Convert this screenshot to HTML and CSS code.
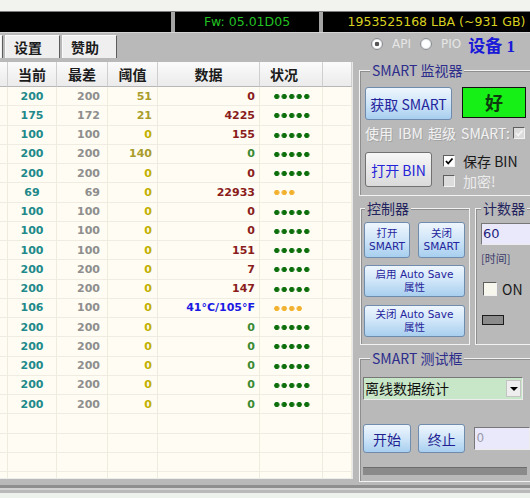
FILE: index.html
```html
<!DOCTYPE html>
<html lang="zh-CN">
<head>
  <meta charset="UTF-8">
  <title>SMART 监视器</title>
  <link rel="stylesheet" href="styles.css">
</head>
<body>
  <div class="top-strip"></div>

  <!-- 状态栏 -->
  <div class="status-bar">
    <div class="seg seg-left"></div>
    <div class="seg seg-fw">Fw: 05.01D05</div>
    <div class="seg seg-lba">1953525168 LBA (~931 GB)</div>
  </div>

  <div class="toolbar">
    <div class="tabs">
      <div class="tab tab-stub"></div>
      <div class="tab">设置</div>
      <div class="tab">赞助</div>
    </div>
    <div class="mode">
      <span class="radio checked"></span><span class="mode-label">API</span>
      <span class="radio"></span><span class="mode-label">PIO</span>
      <span class="device">设备 1</span>
    </div>
  </div>

  <div class="content">
    <!-- SMART 属性表 -->
    <div class="table-panel">
      <table class="smart-table">
        <thead>
          <tr>
            <th class="c-stub"></th>
            <th class="c-cur">当前</th>
            <th class="c-worst">最差</th>
            <th class="c-thr">阈值</th>
            <th class="c-raw">数据</th>
            <th class="c-st">状况</th>
            <th class="c-pad"></th>
          </tr>
        </thead>
        <tbody>
          <tr><td></td><td class="cur">200</td><td class="worst">200</td><td class="thr hi">51</td><td class="raw red">0</td><td class="st"><span class="dots d5"></span></td><td></td></tr>
          <tr><td></td><td class="cur">175</td><td class="worst">172</td><td class="thr hi">21</td><td class="raw red">4225</td><td class="st"><span class="dots d5"></span></td><td></td></tr>
          <tr><td></td><td class="cur">100</td><td class="worst">100</td><td class="thr">0</td><td class="raw red">155</td><td class="st"><span class="dots d5"></span></td><td></td></tr>
          <tr><td></td><td class="cur">200</td><td class="worst">200</td><td class="thr hi">140</td><td class="raw green">0</td><td class="st"><span class="dots d5"></span></td><td></td></tr>
          <tr><td></td><td class="cur">200</td><td class="worst">200</td><td class="thr">0</td><td class="raw red">0</td><td class="st"><span class="dots d5"></span></td><td></td></tr>
          <tr><td></td><td class="cur">69</td><td class="worst">69</td><td class="thr">0</td><td class="raw red">22933</td><td class="st"><span class="dots d3 warn"></span></td><td></td></tr>
          <tr><td></td><td class="cur">100</td><td class="worst">100</td><td class="thr">0</td><td class="raw red">0</td><td class="st"><span class="dots d5"></span></td><td></td></tr>
          <tr><td></td><td class="cur">100</td><td class="worst">100</td><td class="thr">0</td><td class="raw red">0</td><td class="st"><span class="dots d5"></span></td><td></td></tr>
          <tr><td></td><td class="cur">100</td><td class="worst">100</td><td class="thr">0</td><td class="raw red">151</td><td class="st"><span class="dots d5"></span></td><td></td></tr>
          <tr><td></td><td class="cur">200</td><td class="worst">200</td><td class="thr">0</td><td class="raw red">7</td><td class="st"><span class="dots d5"></span></td><td></td></tr>
          <tr><td></td><td class="cur">200</td><td class="worst">200</td><td class="thr">0</td><td class="raw red">147</td><td class="st"><span class="dots d5"></span></td><td></td></tr>
          <tr><td></td><td class="cur">106</td><td class="worst">100</td><td class="thr">0</td><td class="raw blue">41°C/105°F</td><td class="st"><span class="dots d4 warn"></span></td><td></td></tr>
          <tr><td></td><td class="cur">200</td><td class="worst">200</td><td class="thr">0</td><td class="raw green">0</td><td class="st"><span class="dots d5"></span></td><td></td></tr>
          <tr><td></td><td class="cur">200</td><td class="worst">200</td><td class="thr">0</td><td class="raw green">0</td><td class="st"><span class="dots d5"></span></td><td></td></tr>
          <tr><td></td><td class="cur">200</td><td class="worst">200</td><td class="thr">0</td><td class="raw green">0</td><td class="st"><span class="dots d5"></span></td><td></td></tr>
          <tr><td></td><td class="cur">200</td><td class="worst">200</td><td class="thr">0</td><td class="raw green">0</td><td class="st"><span class="dots d5"></span></td><td></td></tr>
          <tr><td></td><td class="cur">200</td><td class="worst">200</td><td class="thr">0</td><td class="raw green">0</td><td class="st"><span class="dots d5"></span></td><td></td></tr>
          <tr><td></td><td></td><td></td><td></td><td></td><td></td><td></td></tr>
          <tr><td></td><td></td><td></td><td></td><td></td><td></td><td></td></tr>
          <tr><td></td><td></td><td></td><td></td><td></td><td></td><td></td></tr>
          <tr><td></td><td></td><td></td><td></td><td></td><td></td><td></td></tr>
        </tbody>
      </table>
    </div>

    <!-- 右侧面板 -->
    <div class="side">
      <fieldset class="group monitor">
        <legend>SMART 监视器</legend>
        <div class="mon-top">
          <div class="btn btn-get">获取 SMART</div>
          <div class="good">好</div>
        </div>
        <div class="ibm">
          <span>使用 IBM 超级 SMART:</span>
          <span class="chk chk-off">
            <svg viewBox="0 0 10 10"><path d="M2 5 L4.2 7.5 L8.5 2.5" stroke="#f4f4f4" stroke-width="1.8" fill="none"/></svg>
          </span>
        </div>
        <div class="mon-bin">
          <div class="btn btn-gray btn-bin">打开 BIN</div>
          <div class="bin-opts">
            <div class="opt">
              <span class="chk">
                <svg viewBox="0 0 10 10"><path d="M2 5 L4.2 7.5 L8.5 2.5" stroke="#000" stroke-width="1.8" fill="none"/></svg>
              </span>
              <span>保存 BIN</span>
            </div>
            <div class="opt opt-off">
              <span class="chk chk-off"></span>
              <span>加密!</span>
            </div>
          </div>
        </div>
      </fieldset>

      <div class="group-row">
        <fieldset class="group control">
          <legend>控制器</legend>
          <div class="ctl-pair">
            <div class="btn btn-sm">打开<br>SMART</div>
            <div class="btn btn-sm">关闭<br>SMART</div>
          </div>
          <div class="btn btn-wide">启用 Auto Save<br>属性</div>
          <div class="btn btn-wide btn-wide2">关闭 Auto Save<br>属性</div>
        </fieldset>
        <fieldset class="group counter">
          <legend>计数器</legend>
          <div class="field field-num">60</div>
          <div class="time">[时间]</div>
          <div class="on-row">
            <span class="chk chk-big"></span>
            <span>ON</span>
          </div>
          <div class="led"></div>
        </fieldset>
      </div>

      <fieldset class="group tester">
        <legend>SMART 测试框</legend>
        <div class="combo">
          <span class="combo-text">离线数据统计</span>
          <span class="combo-arrow">
            <svg width="8" height="4" viewBox="0 0 8 4"><path d="M0 0H8L4 4Z" fill="#000"/></svg>
          </span>
        </div>
        <div class="test-row">
          <div class="btn btn-go">开始</div>
          <div class="btn btn-go btn-stop">终止</div>
          <div class="field field-count">0</div>
        </div>
        <div class="progress"></div>
      </fieldset>
    </div>
  </div>

  <div class="footer"></div>
</body>
</html>
```

FILE: styles.css
```css
body {
  margin: 0;
  width: 530px;
  height: 498px;
  overflow: hidden;
  background: #b9b9b9;
  font-family: "DejaVu Sans", "Noto Sans CJK SC", sans-serif;
  font-size: 12px;
}
.top-strip {
  height: 11px;
  background: #f2f2ef;
}

/* status bar */
.status-bar {
  display: flex;
  gap: 4px;
  height: 20px;
  background: #a4a4a4;
  border-top: 1px solid #7c7c7c;
  border-bottom: 1px solid #d4d4d4;
}
.seg {
  background: #000;
  line-height: 20px;
  font-size: 12.5px;
  text-align: center;
  white-space: nowrap;
}
.seg-left {
  width: 171px;
}
.seg-fw {
  width: 144px;
  color: #22c022;
}
.seg-lba {
  flex: 1;
  padding-left: 20px;
  color: #d8d020;
}

/* tabs + mode */
.toolbar {
  display: flex;
  justify-content: space-between;
  height: 29px;
}
.tabs {
  display: flex;
  gap: 2px;
  padding-top: 2px;
}
.tab {
  width: 55px;
  height: 23px;
  box-sizing: border-box;
  padding-left: 8px;
  background: #efefef;
  border: 1px solid #fafafa;
  border-right-color: #5c5c5c;
  border-bottom: 0;
  font: bold 14px/22px "Noto Sans CJK SC", sans-serif;
  color: #1a1a1a;
}
.tab-stub {
  width: 3px;
  padding: 0;
}
.mode {
  display: flex;
  align-items: center;
  height: 20px;
  margin-top: 1px;
  padding-right: 15px;
}
.radio {
  width: 12px;
  height: 12px;
  box-sizing: border-box;
  border: 1px solid #8d8d8d;
  border-radius: 50%;
  background: #fff;
  box-shadow: inset 0 0 0 1px #dfe6ee;
  margin-right: 9px;
}
.radio.checked {
  background: radial-gradient(circle, #555 2px, #fff 2.6px);
}
.mode-label {
  color: #e6e6e6;
  margin-right: 9px;
}
.device {
  margin-left: -2px;
  font: bold 17px "Liberation Serif", "Noto Sans CJK SC", serif;
  color: #1a1ad8;
}

/* main area */
.content {
  display: flex;
  height: 421px;
}
.table-panel {
  flex-shrink: 0;
  width: 352px;
  height: 416px;
  overflow: hidden;
  background: #fffcf3;
  border-right: 1px solid #e8e8e8;
  border-bottom: 1px solid #ececec;
}
.smart-table {
  border-collapse: separate;
  border-spacing: 0;
  table-layout: fixed;
  width: 352px;
}
.smart-table thead tr {
  height: 25px;
}
.smart-table th {
  box-sizing: border-box;
  padding: 0;
  background: linear-gradient(#fbfbfb, #ebebeb);
  border-right: 1px solid #cfcfcf;
  border-bottom: 1px solid #b8b8b8;
  font: bold 14px/24px "Noto Sans CJK SC", sans-serif;
  color: #1c1c1c;
  text-align: center;
}
.c-stub { width: 8px; }
.c-cur { width: 49px; }
.c-worst { width: 51px; }
.c-thr { width: 50px; }
.c-raw { width: 102px; }
.c-st { width: 63px; text-align: left !important; padding-left: 10px !important; }
.c-pad { width: 29px; }
.smart-table tbody tr {
  height: 19.25px;
}
.smart-table td {
  padding: 0;
  border-right: 1px solid #efebdf;
  border-bottom: 1px solid #f0ece2;
  font: bold 11px/17px "DejaVu Sans", sans-serif;
  white-space: nowrap;
  overflow: hidden;
}
.cur {
  text-align: center;
  color: #21898a;
}
.worst {
  text-align: right;
  padding-right: 7px !important;
  color: #8e8e8e;
}
.thr {
  text-align: right;
  padding-right: 5px !important;
  color: #c2b000;
}
.thr.hi {
  color: #aa9c2c;
}
.raw {
  text-align: right;
  padding-right: 4px !important;
}
.red { color: #8a1c1c; }
.green { color: #3a8a34; }
.blue { color: #1a1ae4; }
.st {
  padding-left: 13px !important;
}
.dots {
  display: inline-block;
  vertical-align: middle;
  height: 7px;
  background-image: radial-gradient(circle, #0c6f0c 2.3px, transparent 2.9px);
  background-size: 7.5px 7px;
  background-repeat: repeat-x;
}
.dots.warn {
  background-image: radial-gradient(circle, #f2b12e 2.3px, transparent 2.9px);
}
.d5 { width: 37.5px; }
.d4 { width: 30px; }
.d3 { width: 22.5px; }

/* right side */
.side {
  flex-shrink: 0;
  width: 175px;
  margin-left: 6px;
  font-family: "Noto Sans CJK SC", sans-serif;
  font-size: 14px;
  color: #1a1a1a;
}
.group {
  margin: 0;
  box-sizing: border-box;
  min-width: 0;
  border: 1px solid #f2f2f2;
  box-shadow: inset 1px 1px 0 #8e8e8e;
}
.group legend {
  padding: 0 2px;
  font-size: 14px;
  line-height: 16px;
  color: #2d2d8c;
  background: #b9b9b9;
}
.btn {
  display: flex;
  align-items: center;
  justify-content: center;
  box-sizing: border-box;
  border: 1px solid #6f8cae;
  border-radius: 3px;
  background: linear-gradient(#eef6fd, #cfe5f8 50%, #a8cfef);
  color: #24249c;
  text-align: center;
  line-height: 16px;
}
.btn-gray {
  border-color: #717171;
  background: linear-gradient(#f7f7f7, #dadada);
  color: #2424d8;
}

.monitor {
  width: 175px;
  padding: 9px 4px 8px 5px;
}
.monitor legend {
  margin-left: 5px;
}
.mon-top {
  display: flex;
  gap: 10px;
}
.btn-get {
  width: 87px;
  height: 33px;
}
.good {
  width: 64px;
  height: 31px;
  box-sizing: border-box;
  background: #16f016;
  border: 1px solid #111;
  font-weight: bold;
  font-size: 18px;
  line-height: 29px;
  text-align: center;
  color: #0f3a0f;
}
.ibm {
  display: flex;
  justify-content: space-between;
  align-items: center;
  height: 16px;
  margin-top: 5px;
  padding-right: 4px;
  line-height: 16px;
  word-spacing: 2px;
  color: #f2f2f2;
  text-shadow: 1px 1px 0 #a4a4a4;
}
.chk {
  display: flex;
  width: 12px;
  height: 12px;
  box-sizing: border-box;
  border: 1px solid;
  border-color: #5e5e5e #f2f2f2 #f2f2f2 #5e5e5e;
  background: #fff;
}
.chk svg {
  width: 10px;
  height: 10px;
}
.chk-off {
  background: #dcdcdc;
}
.chk-big {
  width: 14px;
  height: 14px;
  background: #f8f7ee;
}
.mon-bin {
  display: flex;
  gap: 11px;
  margin-top: 11px;
}
.btn-bin {
  width: 67px;
  height: 35px;
}
.bin-opts {
  display: flex;
  flex-direction: column;
  gap: 8px;
  padding-top: 3px;
}
.opt {
  display: flex;
  align-items: center;
  gap: 8px;
  height: 12px;
  line-height: 12px;
}
.opt-off {
  color: #ececec;
}

.group-row {
  display: flex;
  margin-top: 4px;
}
.control {
  width: 110px;
  margin-left: 1px;
  padding: 6px 4px 7px 3px;
}
.control legend,
.counter legend {
  color: #24245e;
}
.control legend {
  margin-left: 1px;
}
.ctl-pair {
  display: flex;
  gap: 8px;
}
.btn-sm,
.btn-wide {
  font-family: "DejaVu Sans", "Noto Sans CJK SC", sans-serif;
  font-size: 10.5px;
  line-height: 13px;
}
.btn-sm {
  width: 46px;
  height: 36px;
}
.btn-sm + .btn-sm {
  width: 47px;
}
.btn-wide {
  width: 101px;
  height: 32px;
  margin-top: 7px;
}
.btn-wide2 {
  margin-top: 8px;
}
.counter {
  width: 59px;
  margin-left: 5px;
  padding: 7px 0 0 5px;
}
.field {
  box-sizing: border-box;
  border: 1px solid;
  border-color: #777 #ececec #ececec #777;
  background: #e9e9fb;
  padding-left: 1px;
  font-family: "DejaVu Sans", sans-serif;
}
.field-num {
  width: 55px;
  height: 22px;
  line-height: 20px;
  font-size: 13px;
  color: #1f1f7a;
}
.time {
  margin-top: 7px;
  font-size: 11px;
  line-height: 12px;
  color: #3c3c6a;
}
.on-row {
  display: flex;
  align-items: center;
  gap: 5px;
  height: 14px;
  margin-top: 18px;
  margin-left: 2px;
  line-height: 14px;
}
.led {
  width: 22px;
  height: 10px;
  box-sizing: border-box;
  margin-top: 19px;
  margin-left: 1px;
  background: #8b8b8b;
  border: 1px solid #1c1c1c;
}

.tester {
  width: 175px;
  margin-top: 5px;
  padding: 11px 3px 6px 3px;
}
.tester legend {
  margin-left: 7px;
}
.combo {
  display: flex;
  width: 160px;
  height: 23px;
  box-sizing: border-box;
  border: 1px solid;
  border-color: #777 #ececec #ececec #777;
  background: #c8e6c8;
}
.combo-text {
  flex: 1;
  padding-left: 1px;
  line-height: 21px;
  color: #111;
}
.combo-arrow {
  display: flex;
  align-items: center;
  justify-content: center;
  width: 15px;
  margin: 2px 1px 2px 0;
  background: #eeeeee;
  border: 1px solid #c4c4c4;
  box-sizing: border-box;
}
.test-row {
  display: flex;
  align-items: center;
  gap: 7px;
  margin-top: 24px;
}
.btn-go {
  width: 52px;
  height: 29px;
  color: #1f1f92;
}
.btn-stop {
  width: 51px;
}
.field-count {
  width: 60px;
  height: 23px;
  margin-left: 2px;
  line-height: 21px;
  font-size: 12px;
  color: #9a9aaa;
}
.progress {
  width: 164px;
  height: 8px;
  box-sizing: border-box;
  margin-top: 14px;
  background: #8a8a8a;
  border-top: 1px solid #6c6c6c;
}

.footer {
  height: 15px;
  background: linear-gradient(to bottom, #b9b9b9 0 2px, #8e8e8e 2px 5px, #d2d2d2 5px 7px, #b9b9b9 7px 10px, #eef2ec 10px);
}
```
